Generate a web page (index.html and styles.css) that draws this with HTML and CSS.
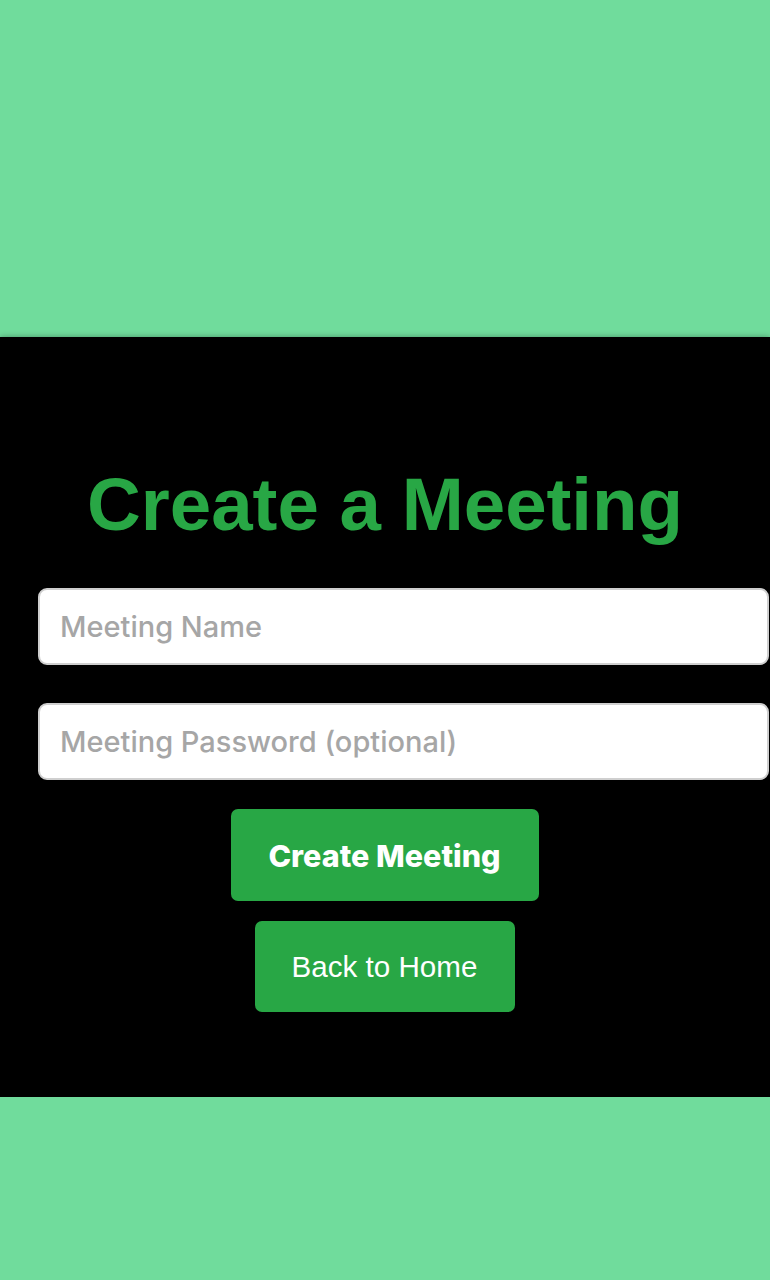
FILE: index.html
```html
<!DOCTYPE html>
<html lang="en">
<head>
<meta charset="utf-8">
<title>Create a Meeting</title>
<link rel="stylesheet" href="styles.css">
</head>
<body>
<div class="top"></div>
<main class="panel">
  <h1 class="title">Create a Meeting</h1>
  <form class="form">
    <input class="field" type="text" placeholder="Meeting Name">
    <input class="field" type="password" placeholder="Meeting Password (optional)">
    <div class="actions">
      <button class="btn btn-create" type="button">Create Meeting</button>
      <button class="btn btn-back" type="button">Back to Home</button>
    </div>
  </form>
</main>
<div class="bottom"></div>
</body>
</html>
```

FILE: styles.css
```css
html, body {
  margin: 0;
  padding: 0;
}
body {
  background: #70dc9c;
  width: 770px;
  overflow: hidden;
}
.top {
  height: 337px;
  background: #70dc9c;
}
.panel {
  background: #000;
  padding: 131px 0 85px;
  box-shadow: 0 0 6px rgba(0,0,0,0.35);
}
.title {
  margin: 0 0 46px;
  text-align: center;
  font-family: "Liberation Sans", Arial, sans-serif;
  font-weight: 700;
  font-size: 74.5px;
  line-height: 74px;
  color: #28a745;
}
.form {
  display: flex;
  flex-direction: column;
  padding: 0 1px 0 38px;
}
.field {
  box-sizing: border-box;
  width: 100%;
  height: 77px;
  margin: 0 0 38px;
  padding: 0 20px;
  border: 2px solid #cfcfcf;
  border-radius: 9px;
  background: #fff;
  font-family: Inter, "Noto Sans", sans-serif;
  font-size: 29px;
  color: #333;
  outline: none;
}
.field:last-of-type {
  margin-bottom: 29px;
}
.field::placeholder {
  color: #a6a6a6;
  font-weight: 500;
}
.actions {
  display: flex;
  flex-direction: column;
  align-items: center;
  gap: 20px;
  margin-left: -38px;
}
.btn {
  border: none;
  border-radius: 7px;
  background: #28a745;
  color: #fff;
  cursor: pointer;
}
.btn-create {
  width: 308px;
  height: 92px;
  font-family: Inter, "Noto Sans", sans-serif;
  font-weight: 800;
  font-size: 30.5px;
}
.btn-back {
  width: 260px;
  height: 91px;
  font-family: "Liberation Sans", Arial, sans-serif;
  font-weight: 400;
  font-size: 29.6px;
}
.bottom {
  height: 200px;
  background: #70dc9c;
}
```
